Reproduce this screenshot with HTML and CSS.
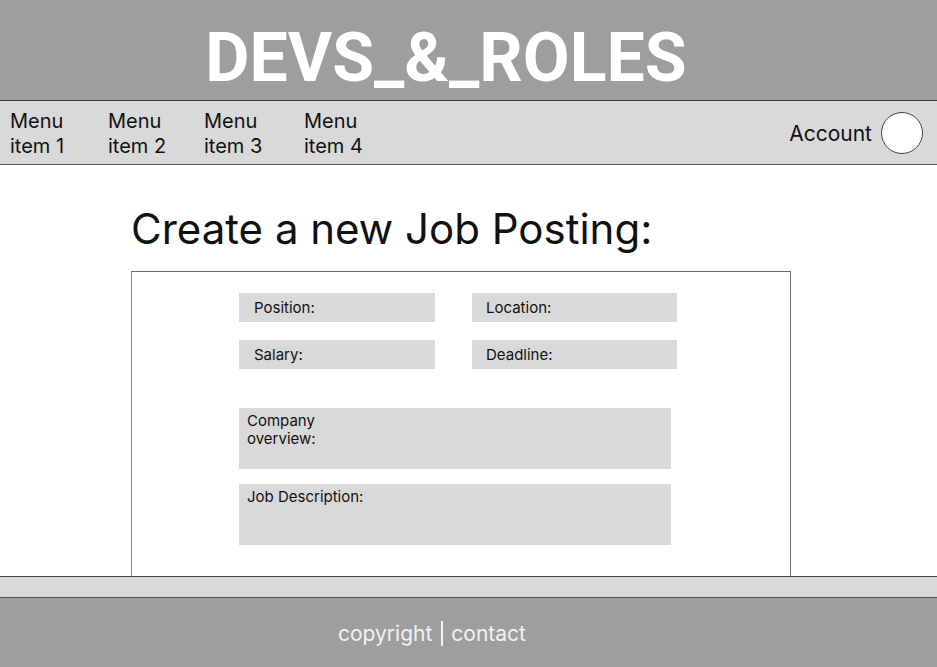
FILE: index.html
```html
<!DOCTYPE html>
<html lang="en">
<head>
<meta charset="utf-8">
<title>DEVS_&amp;_ROLES</title>
<link rel="stylesheet" href="styles.css">
</head>
<body>
<div class="page">
  <header class="masthead">
    <h1 class="brand">DEVS_&amp;_ROLES</h1>
  </header>
  <nav class="nav">
    <ul class="menu">
      <li class="menu-item w1">Menu<br>item 1</li>
      <li class="menu-item w2">Menu<br>item 2</li>
      <li class="menu-item w3">Menu<br>item 3</li>
      <li class="menu-item w4">Menu<br>item 4</li>
    </ul>
    <div class="account">
      <span class="account-label">Account</span>
      <span class="avatar"></span>
    </div>
  </nav>
  <main class="main">
    <h2 class="title">Create a new Job Posting:</h2>
    <section class="form-box">
      <div class="grid">
        <div class="field short-l">Position:</div>
        <div class="field short-r">Location:</div>
        <div class="field short-l">Salary:</div>
        <div class="field short-r">Deadline:</div>
      </div>
      <div class="area area-first">Company<br>overview:</div>
      <div class="area">Job Description:</div>
    </section>
  </main>
  <div class="band"></div>
  <footer class="footer">
    <span>copyright</span><span class="sep"></span><span>contact</span>
  </footer>
</div>
</body>
</html>
```
FILE: styles.css
```css
* { box-sizing: border-box; }
html, body { margin: 0; padding: 0; }
body {
  font-family: Inter, "Noto Sans", sans-serif;
  color: #111;
  background: #fff;
}
.page {
  width: 937px;
  height: 667px;
  display: flex;
  flex-direction: column;
  overflow: hidden;
}
.masthead {
  height: 101px;
  background: #9e9e9e;
  border-bottom: 1px solid #3a3a3a;
  display: flex;
  align-items: center;
  justify-content: center;
  padding-right: 45px;
  flex: none;
}
.brand {
  margin: 0;
  font-family: Roboto, "Liberation Sans", sans-serif;
  font-weight: 700;
  font-size: 68px;
  line-height: 1;
  color: #fff;
  padding-top: 16px;
}
.nav {
  height: 64px;
  background: #d9d9d9;
  border-bottom: 1px solid #555;
  display: flex;
  align-items: center;
  justify-content: space-between;
  padding: 0 14px 0 10px;
  flex: none;
}
.menu {
  list-style: none;
  margin: 0;
  padding: 0;
  display: flex;
}
.menu-item {
  font-size: 20px;
  line-height: 25px;
  padding-top: 2px;
}
.w1 { width: 98px; }
.w2 { width: 96px; }
.w3 { width: 100px; }
.w4 { width: 70px; }
.account {
  display: flex;
  align-items: center;
  gap: 9px;
}
.account-label {
  font-size: 21px;
  line-height: 26px;
  padding-top: 2px;
}
.avatar {
  width: 42px;
  height: 42px;
  border-radius: 50%;
  background: #fff;
  border: 1px solid #444;
  display: block;
}
.main {
  height: 411px;
  padding: 38px 0 0 131px;
  flex: none;
}
.title {
  margin: 0 0 16px;
  font-weight: 400;
  font-size: 42px;
  line-height: 52px;
}
.form-box {
  width: 660px;
  height: 305px;
  border: 1px solid #666;
  border-left-color: #8a8a8a;
  border-bottom: none;
  padding: 21px 0 0 107px;
}
.grid {
  display: grid;
  grid-template-columns: 196px 205px;
  column-gap: 37px;
  row-gap: 18px;
  margin-bottom: 39px;
}
.field {
  height: 29px;
  background: #d9d9d9;
  font-size: 15px;
  display: flex;
  align-items: center;
  padding-left: 15px;
}
.short-r { padding-left: 14px; }
.area {
  width: 432px;
  height: 61px;
  background: #d9d9d9;
  font-size: 15px;
  line-height: 18px;
  padding: 4px 8px;
}
.area-first { margin-bottom: 15px; }
.band {
  height: 22px;
  background: #d9d9d9;
  border-top: 1px solid #444;
  border-bottom: 1px solid #555;
  flex: none;
}
.footer {
  flex: 1;
  background: #9e9e9e;
  color: #f2f2f2;
  font-size: 21px;
  display: flex;
  align-items: center;
  justify-content: center;
  padding-right: 73px;
  padding-top: 2px;
}
.sep {
  display: inline-block;
  width: 2px;
  height: 25px;
  background: #f2f2f2;
  margin: 0 8px 0 9px;
}
```
